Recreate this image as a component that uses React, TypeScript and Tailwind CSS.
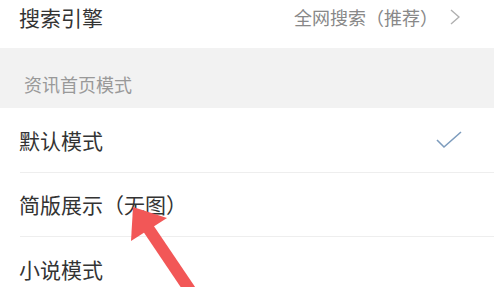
export default function App() {
  const font = { fontFamily: '"Noto Sans CJK SC", "Noto Sans", sans-serif' }

  return (
    <div className="relative h-[287px] w-[494px] overflow-hidden bg-white text-[#333]" style={font}>
      {/* 搜索引擎 */}
      <div className="flex h-[48px] items-center justify-between pb-[14px] pl-[19px] pr-[34px]">
        <span className="text-[21px] leading-none">搜索引擎</span>
        <div className="flex items-center gap-[12px]">
          <span className="text-[18px] leading-none text-[#888]">全网搜索（推荐）</span>
          <svg width="10" height="16" viewBox="0 0 10 16" fill="none">
            <polyline points="1,1 9,8 1,15" stroke="#b0b0b0" strokeWidth="1.4" />
          </svg>
        </div>
      </div>

      {/* section header */}
      <div className="flex h-[60px] items-center bg-[#f2f2f2] pl-[24px] pt-[12px]">
        <span className="text-[18px] leading-none text-[#999]">资讯首页模式</span>
      </div>

      {/* options */}
      <div className="flex h-[64px] items-center justify-between pl-[19px] pr-[32px]">
        <span className="text-[21px] leading-none">默认模式</span>
        <svg width="26" height="18" viewBox="0 0 26 18" fill="none">
          <polyline points="1,9 8,16 25,1" stroke="#7d9cbd" strokeWidth="1.6" />
        </svg>
      </div>
      <div className="ml-[20px] h-px bg-[#eeeeee]" />
      <div className="flex h-[63px] items-center pl-[19px]">
        <span className="text-[21px] leading-none">简版展示（无图）</span>
      </div>
      <div className="ml-[20px] h-px bg-[#eeeeee]" />
      <div className="flex h-[64px] items-center pl-[19px]">
        <span className="text-[21px] leading-none">小说模式</span>
      </div>

      {/* red arrow annotation */}
      <svg className="pointer-events-none absolute left-0 top-0" width="494" height="287" viewBox="0 0 494 287">
        <line x1="146" y1="225" x2="200" y2="305" stroke="#f25757" strokeWidth="12" />
        <polygon points="133,207 167,218 131,241" fill="#f25757" />
      </svg>
    </div>
  )
}
